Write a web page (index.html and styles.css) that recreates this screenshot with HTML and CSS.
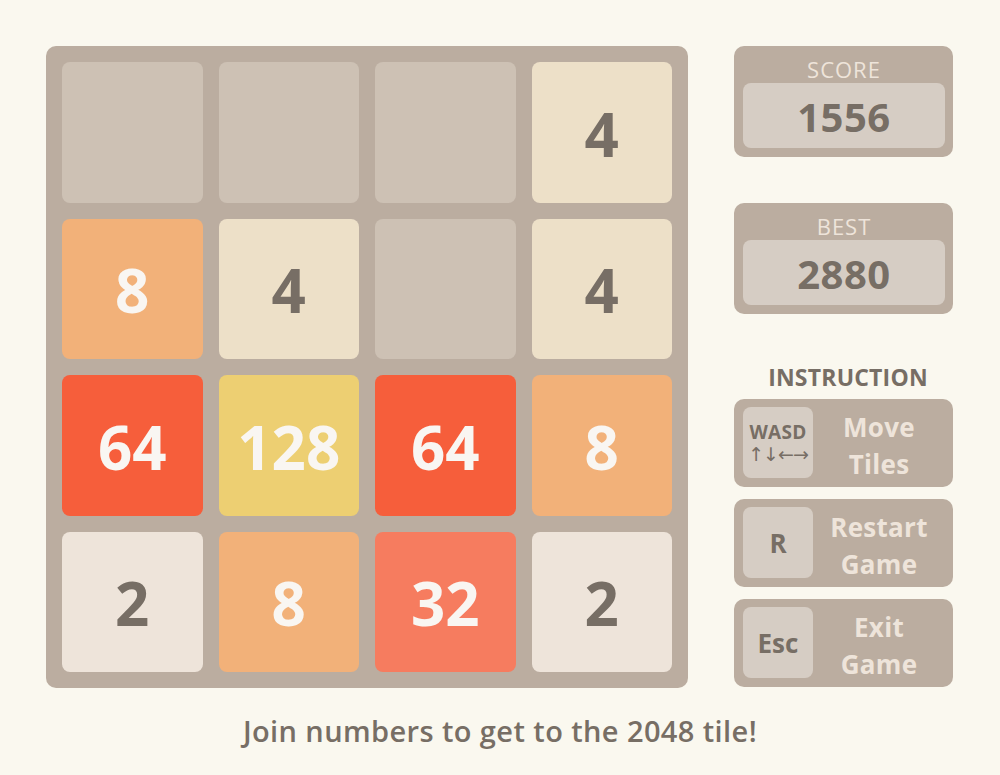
FILE: index.html
```html
<!DOCTYPE html>
<html>
<head>
<meta charset="utf-8">
<link rel="stylesheet" href="styles.css">
</head>
<body>
<div class="page">
  <div class="main">
    <div class="board">
      <div class="tile t0"></div>
      <div class="tile t0"></div>
      <div class="tile t0"></div>
      <div class="tile t4">4</div>
      <div class="tile t8">8</div>
      <div class="tile t4">4</div>
      <div class="tile t0"></div>
      <div class="tile t4">4</div>
      <div class="tile t64">64</div>
      <div class="tile t128">128</div>
      <div class="tile t64">64</div>
      <div class="tile t8">8</div>
      <div class="tile t2">2</div>
      <div class="tile t8">8</div>
      <div class="tile t32">32</div>
      <div class="tile t2">2</div>
    </div>
    <div class="side">
      <div class="stat">
        <div class="stat-label">SCORE</div>
        <div class="stat-value">1556</div>
      </div>
      <div class="stat stat-best">
        <div class="stat-label">BEST</div>
        <div class="stat-value">2880</div>
      </div>
      <div class="instr-title">INSTRUCTION</div>
      <div class="instr">
        <div class="key key-wasd"><span class="wasd">WASD</span><span class="arrows">↑↓←→</span></div>
        <div class="instr-text">Move<br>Tiles</div>
      </div>
      <div class="instr">
        <div class="key">R</div>
        <div class="instr-text">Restart<br>Game</div>
      </div>
      <div class="instr">
        <div class="key">Esc</div>
        <div class="instr-text">Exit<br>Game</div>
      </div>
    </div>
  </div>
  <div class="footer">Join numbers to get to the 2048 tile!</div>
</div>
</body>
</html>
```
FILE: styles.css
```css
html, body {
  margin: 0;
  padding: 0;
  background: #faf8ef;
}
body {
  width: 1000px;
  height: 775px;
  overflow: hidden;
  font-family: "Open Sans", "Noto Sans", sans-serif;
  color: #776e65;
}
.page {
  padding: 46px 0 0 46px;
}
.main {
  display: flex;
  align-items: flex-start;
  gap: 46px;
}
.board {
  width: 642px;
  height: 642px;
  box-sizing: border-box;
  padding: 16px;
  background: #bbada0;
  border-radius: 10px;
  display: grid;
  grid-template-columns: repeat(4, 1fr);
  grid-template-rows: repeat(4, 1fr);
  gap: 16px;
}
.tile {
  border-radius: 8px;
  display: flex;
  align-items: center;
  justify-content: center;
  font-weight: 700;
  font-size: 60px;
  line-height: 1;
  padding-top: 3px;
  box-sizing: border-box;
}
.t0 { background: #cdc1b4; }
.t2 { background: #eee4da; color: #776e65; }
.t4 { background: #ede0c8; color: #776e65; }
.t8 { background: #f2b179; color: #f9f6f2; }
.t32 { background: #f67c5f; color: #f9f6f2; }
.t64 { background: #f65e3b; color: #f9f6f2; }
.t128 { background: #edcf72; color: #f9f6f2; }

.side {
  width: 219px;
  display: flex;
  flex-direction: column;
}
.stat {
  height: 111px;
  box-sizing: border-box;
  background: #bbada0;
  border-radius: 10px;
  padding: 0 8px 9px 9px;
  display: flex;
  flex-direction: column;
}
.stat-best {
  margin-top: 46px;
}
.stat-label {
  height: 37px;
  display: flex;
  align-items: center;
  justify-content: center;
  padding-top: 8px;
  box-sizing: border-box;
  color: #eee4da;
  font-size: 22px;
  letter-spacing: 1px;
}
.stat-value {
  flex: 1;
  background: #d6cdc4;
  border-radius: 8px;
  display: flex;
  align-items: center;
  justify-content: center;
  font-weight: 700;
  font-size: 40px;
  letter-spacing: 0.5px;
  padding-top: 2px;
  box-sizing: border-box;
}
.instr-title {
  margin-top: 46px;
  height: 39px;
  display: flex;
  align-items: center;
  justify-content: center;
  padding: 0 0 6px 9px;
  box-sizing: border-box;
  font-weight: 700;
  font-size: 23px;
  letter-spacing: 0.2px;
}
.instr {
  height: 88px;
  box-sizing: border-box;
  background: #bbada0;
  border-radius: 10px;
  padding: 8px 8px 9px 9px;
  display: flex;
}
.instr + .instr {
  margin-top: 12px;
}
.key {
  width: 70px;
  background: #d6cdc4;
  border-radius: 8px;
  display: flex;
  align-items: center;
  justify-content: center;
  font-weight: 700;
  font-size: 26px;
}
.key-wasd {
  flex-direction: column;
}
.wasd {
  font-size: 19px;
  line-height: 22px;
  letter-spacing: 0.3px;
}
.arrows {
  font-family: "DejaVu Sans", sans-serif;
  font-weight: 400;
  font-size: 19px;
  line-height: 22px;
  letter-spacing: -1px;
}
.instr-text {
  flex: 1;
  display: flex;
  align-items: center;
  justify-content: center;
  text-align: center;
  color: #eee4da;
  font-weight: 700;
  font-size: 26px;
  line-height: 37px;
  letter-spacing: 0.3px;
  padding-top: 7px;
  box-sizing: border-box;
}
.footer {
  text-align: center;
  margin-top: 23px;
  margin-left: -46px;
  font-weight: 600;
  font-size: 29px;
  letter-spacing: 0.4px;
}
```
